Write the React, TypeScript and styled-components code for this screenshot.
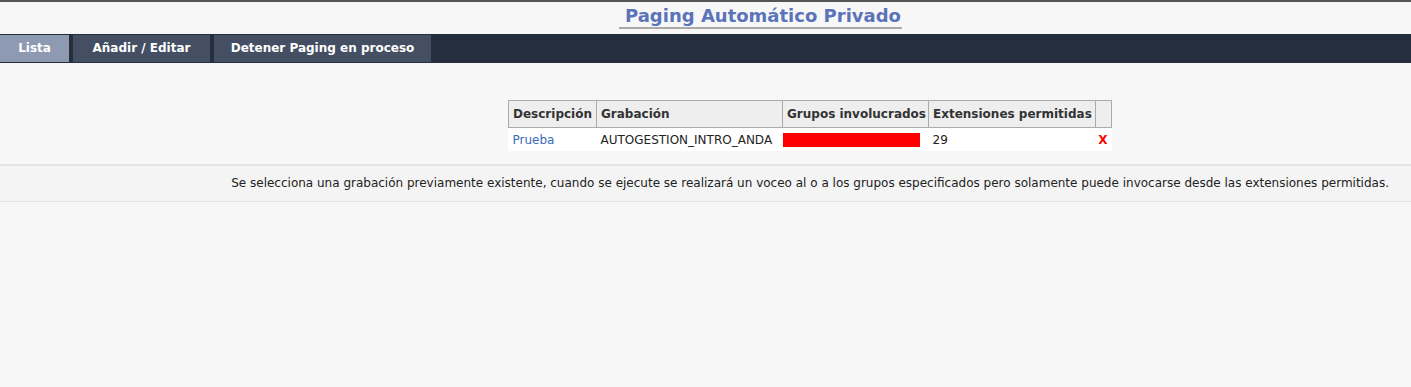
import React from "react";
import styled, { createGlobalStyle } from "styled-components";

const GlobalStyle = createGlobalStyle`
  html, body {
    margin: 0;
    padding: 0;
    background: #f7f7f7;
    font-family: "DejaVu Sans", Verdana, sans-serif;
    font-size: 12px;
    color: #222;
  }
`;

const Page = styled.div`
  min-height: 387px;
  border-top: 2px solid #555;
  box-sizing: border-box;
`;

const TitleWrap = styled.div`
  display: flex;
  justify-content: center;
  padding: 3px 0 0 110px;
  height: 29px;
  box-sizing: border-box;
`;

const Title = styled.h1`
  margin: 0;
  font-size: 18px;
  font-weight: bold;
  color: #5b73b9;
  line-height: 22px;
  padding: 0 1px 0 6px;
  border-bottom: 2px solid #a9a9a9;
  height: 22px;
`;

const NavBar = styled.nav`
  display: flex;
  gap: 4px;
  background: #252e3d;
  padding: 1px 0;
  margin-top: 3px;
`;

const Tab = styled.a<{ $active?: boolean; $w: number }>`
  display: block;
  width: ${(p) => p.$w}px;
  text-align: center;
  height: 27px;
  line-height: 27px;
  font-weight: bold;
  font-size: 12px;
  color: #fff;
  text-decoration: none;
  background: ${(p) => (p.$active ? "#8e9ab1" : "#454f63")};
  cursor: pointer;
`;

const Content = styled.div`
  display: flex;
  justify-content: center;
  padding: 37px 0 13px 209px;
`;

const Table = styled.table`
  width: 598px;
  border-collapse: collapse;
  table-layout: fixed;
  background: #fff;
`;

const Th = styled.th<{ $w: number }>`
  width: ${(p) => p.$w}px;
  background: #eeeeee;
  border: 1px solid #aaaaaa;
  text-align: left;
  font-weight: bold;
  padding: 0 4px;
  height: 26px;
  color: #333;
  white-space: nowrap;
  overflow: hidden;
`;

const Td = styled.td`
  height: 23px;
  padding: 0 4px;
  white-space: nowrap;
  overflow: hidden;
  color: #222;
`;

const Link = styled.a`
  color: #3a6cb5;
  text-decoration: none;
`;

const Redacted = styled.div<{ $w: number }>`
  width: ${(p) => p.$w}px;
  height: 14px;
  background: #ff0000;
  margin-left: -4px;
`;

const Delete = styled.span`
  color: #ff0000;
  font-weight: bold;
  float: right;
`;

const Hint = styled.div`
  background: #f4f4f4;
  border-top: 2px solid #e4e4e4;
  border-bottom: 1px solid #e4e4e4;
  padding: 0 22px;
  height: 35px;
  line-height: 35px;
  text-align: right;
  color: #222;
`;

export default function App() {
  return (
    <>
      <GlobalStyle />
      <Page>
        <TitleWrap>
          <Title>Paging Automático Privado</Title>
        </TitleWrap>
        <NavBar>
          <Tab $active $w={69}>Lista</Tab>
          <Tab $w={137}>Añadir / Editar</Tab>
          <Tab $w={217}>Detener Paging en proceso</Tab>
        </NavBar>
        <Content>
          <Table>
            <thead>
              <tr>
                <Th $w={79}>Descripción</Th>
                <Th $w={177}>Grabación</Th>
                <Th $w={137}>Grupos involucrados</Th>
                <Th $w={158}>Extensiones permitidas</Th>
                <Th $w={7}></Th>
              </tr>
            </thead>
            <tbody>
              <tr>
                <Td>
                  <Link>Prueba</Link>
                </Td>
                <Td>AUTOGESTION_INTRO_ANDA</Td>
                <Td>
                  <Redacted $w={137} />
                </Td>
                <Td>29</Td>
                <Td>
                  <Delete>X</Delete>
                </Td>
              </tr>
            </tbody>
          </Table>
        </Content>
        <Hint>
          Se selecciona una grabación previamente existente, cuando se ejecute se realizará un voceo al o a los grupos especificados pero solamente puede invocarse desde las extensiones permitidas.
        </Hint>
      </Page>
    </>
  );
}
